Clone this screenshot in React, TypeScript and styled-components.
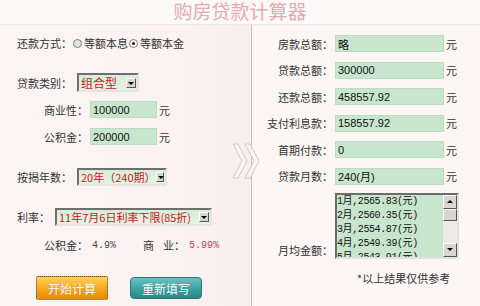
import React from 'react'
import styled, {createGlobalStyle} from 'styled-components'

const GlobalStyle = createGlobalStyle`
  body {
    margin: 0;
    background: #fbf4f3;
    font-family: "Noto Sans CJK SC", "Liberation Sans", sans-serif;
  }
`

const schedule = [
  '1月,2565.83(元)',
  '2月,2560.35(元)',
  '3月,2554.87(元)',
  '4月,2549.39(元)',
  '5月,2543.91(元)',
]

const results = [
  {label: '房款总额：', value: '略'},
  {label: '贷款总额：', value: '300000'},
  {label: '还款总额：', value: '458557.92'},
  {label: '支付利息款：', value: '158557.92'},
  {label: '首期付款：', value: '0'},
  {label: '贷款月数：', value: '240(月)'},
]

const App = () => {
  return (
    <Page>
      <GlobalStyle />
      <Title>购房贷款计算器</Title>
      <Main>
        <Left>
          <Row $top={9} $h={18}>
            <Label $w={55}>还款方式：</Label>
            <Radio />
            <Text>等额本息</Text>
            <Radio $checked />
            <Text>等额本金</Text>
          </Row>
          <Row $top={21} $h={19}>
            <Label $w={60}>贷款类别：</Label>
            <Select $w={62}>
              <SelectText $big>组合型</SelectText>
              <DropButton />
            </Select>
          </Row>
          <Row $top={9} $h={17}>
            <Label $w={71} $right>商业性：</Label>
            <Field $w={67} readOnly defaultValue="100000" />
            <Unit>元</Unit>
          </Row>
          <Row $top={10} $h={17}>
            <Label $w={71} $right>公积金：</Label>
            <Field $w={67} readOnly defaultValue="200000" />
            <Unit>元</Unit>
          </Row>
          <Row $top={23} $h={18}>
            <Label $w={60}>按揭年数：</Label>
            <Select $w={90}>
              <SelectText>20年（240期）</SelectText>
              <DropButton />
            </Select>
          </Row>
          <Row $top={22} $h={18}>
            <Label $w={38}>利率：</Label>
            <Select $w={157}>
              <SelectText>11年7月6日利率下限(85折)</SelectText>
              <DropButton />
            </Select>
          </Row>
          <Row $top={12} $h={14}>
            <Label $w={71} $right>公积金：</Label>
            <Rate $w={51}>4.9%</Rate>
            <Label $w={42}>
              <Spaced>商</Spaced>业：
            </Label>
            <Rate $red>5.99%</Rate>
          </Row>
          <ButtonRow>
            <ActionButton $kind="orange">开始计算</ActionButton>
            <ActionButton $kind="teal">重新填写</ActionButton>
          </ButtonRow>
        </Left>
        <Divider>
          <Arrows width="30" height="36" viewBox="0 0 30 36">
            <polygon points="1,1 6,1 15,18 6,35 1,35 10,18" fill="#fbf4f3" stroke="#d4c6c6" strokeWidth="1" />
            <polygon points="13,1 18,1 27,18 18,35 13,35 22,18" fill="#fbf4f3" stroke="#d4c6c6" strokeWidth="1" />
          </Arrows>
        </Divider>
        <Right>
          {results.map((r) => (
            <ResultRow key={r.label}>
              <ResultLabel>{r.label}</ResultLabel>
              <Field $w={109} readOnly defaultValue={r.value} />
              <Unit>元</Unit>
            </ResultRow>
          ))}
          <ListRow>
            <ResultLabel>月均金额：</ResultLabel>
            <ListBox>
              <ListItems>
                {schedule.map((s) => (
                  <ListItem key={s}>{s}</ListItem>
                ))}
              </ListItems>
              <ScrollBar>
                <ScrollButton>
                  <Tri $up />
                </ScrollButton>
                <Thumb />
                <Track />
                <ScrollButton>
                  <Tri />
                </ScrollButton>
              </ScrollBar>
            </ListBox>
          </ListRow>
          <Note>*以上结果仅供参考</Note>
        </Right>
      </Main>
    </Page>
  )
}

export default App

const Page = styled.div`
  width: 480px;
  height: 306px;
  display: flex;
  flex-direction: column;
  overflow: hidden;
  background: #fbf4f3;
`
const Title = styled.div`
  height: 24px;
  line-height: 22px;
  text-align: center;
  font-size: 19px;
  color: #e3aab2;
  background: #fdf9f8;
  border-bottom: 1px solid #f1e6e4;
`
const Main = styled.div`
  flex: 1;
  display: flex;
`
const Left = styled.div`
  width: 251px;
  padding-left: 17px;
  box-sizing: border-box;
  display: flex;
  flex-direction: column;
  background: linear-gradient(90deg, #fbf5f4 0%, #fbf2f1 70%, #f8eeed 100%);
`
const Row = styled.div<{$top: number; $h: number}>`
  display: flex;
  align-items: center;
  margin-top: ${(p) => p.$top}px;
  height: ${(p) => p.$h}px;
`
const Label = styled.span<{$w: number; $right?: boolean}>`
  width: ${(p) => p.$w}px;
  flex-shrink: 0;
  font-size: 11px;
  color: #333;
  white-space: nowrap;
  text-align: ${(p) => (p.$right ? 'right' : 'left')};
`
const Spaced = styled.span`
  margin-right: 9px;
`
const Text = styled.span`
  font-size: 11px;
  color: #333;
  margin-left: 2px;
`
const Radio = styled.span<{$checked?: boolean}>`
  width: 9px;
  height: 9px;
  border-radius: 50%;
  box-sizing: border-box;
  border: 1px solid #7d7d7d;
  background: ${(p) => (p.$checked ? '#fff' : '#d6ecd9')};
  margin-left: 1px;
  position: relative;
  &::after {
    content: '';
    display: ${(p) => (p.$checked ? 'block' : 'none')};
    position: absolute;
    left: 2px;
    top: 2px;
    width: 3px;
    height: 3px;
    border-radius: 50%;
    background: #111;
  }
`
const Select = styled.div<{$w: number}>`
  width: ${(p) => p.$w}px;
  height: 100%;
  box-sizing: border-box;
  display: flex;
  align-items: center;
  justify-content: space-between;
  border: 2px solid;
  border-color: #6f6f6f #e4e4e4 #e4e4e4 #6f6f6f;
  background: linear-gradient(180deg, #d8ecd9 0%, #e6f1e4 100%);
  padding: 0 1px 0 2px;
`
const SelectText = styled.span<{$big?: boolean}>`
  font-size: ${(p) => (p.$big ? '12px' : '11px')};
  color: #c41a1a;
  white-space: nowrap;
  line-height: 1;
`
const DropButton = styled.span`
  width: 10px;
  height: 10px;
  box-sizing: border-box;
  border: 1px solid;
  border-color: #fff #555 #555 #fff;
  background: #d8d6d0;
  position: relative;
  &::after {
    content: '';
    position: absolute;
    left: 1px;
    top: 3px;
    border-left: 3px solid transparent;
    border-right: 3px solid transparent;
    border-top: 3px solid #000;
  }
`
const Field = styled.input<{$w: number}>`
  width: ${(p) => p.$w}px;
  height: 100%;
  box-sizing: border-box;
  border: 1px solid #bcdcc2;
  background: #c7e6cd;
  padding: 0 0 0 2px;
  margin: 0 0 0 2px;
  font-family: "Liberation Sans", "Noto Sans CJK SC", sans-serif;
  font-size: 11px;
  color: #111;
  outline: none;
`
const Unit = styled.span`
  font-size: 11px;
  color: #333;
  margin-left: 2px;
`
const Rate = styled.span<{$w?: number; $red?: boolean}>`
  width: ${(p) => (p.$w ? `${p.$w}px` : 'auto')};
  font-family: "Liberation Mono", monospace;
  font-size: 10px;
  color: ${(p) => (p.$red ? '#b9444c' : '#444')};
  margin-left: 4px;
`
const ButtonRow = styled.div`
  display: flex;
  align-items: center;
  gap: 22px;
  margin-top: 24px;
  padding-left: 19px;
`
const ActionButton = styled.button<{$kind: 'orange' | 'teal'}>`
  width: 72px;
  height: ${(p) => (p.$kind === 'orange' ? '24px' : '22px')};
  box-sizing: border-box;
  border-radius: ${(p) => (p.$kind === 'orange' ? '2px' : '4px')};
  border: 1px ${(p) => (p.$kind === 'orange' ? 'dotted #5a4a30' : 'solid #2b7676')};
  background: ${(p) =>
    p.$kind === 'orange'
      ? 'linear-gradient(180deg, #fdd45a 0%, #f7a921 50%, #e98a05 100%)'
      : 'linear-gradient(180deg, #6cc4c2 0%, #3fa5a4 50%, #2a8887 100%)'};
  color: #fff;
  font-family: "Noto Sans CJK SC", sans-serif;
  font-size: 12px;
  padding: 0;
  text-shadow: 0 0 1px rgba(0, 0, 0, 0.2);
`
const Divider = styled.div`
  width: 1px;
  background: #c9bdbd;
  position: relative;
`
const Arrows = styled.svg`
  position: absolute;
  left: -19px;
  top: 118px;
`
const Right = styled.div`
  flex: 1;
  display: flex;
  flex-direction: column;
  padding-top: 10px;
  background: #fcf6f5;
`
const ResultRow = styled.div`
  display: flex;
  align-items: center;
  height: 17px;
  margin-bottom: 9.6px;
`
const ResultLabel = styled.span`
  width: 81px;
  flex-shrink: 0;
  text-align: right;
  font-size: 11px;
  color: #333;
  white-space: nowrap;
`
const ListRow = styled.div`
  display: flex;
  align-items: flex-end;
  margin-top: -2px;
  ${ResultLabel} {
    margin-bottom: 1px;
  }
`
const ListBox = styled.div`
  width: 124px;
  height: 66px;
  margin-left: 2px;
  box-sizing: border-box;
  border: 2px solid;
  border-color: #6c6c6c #e2e2e2 #e2e2e2 #6c6c6c;
  background: #c7e6cd;
  display: flex;
  overflow: hidden;
`
const ListItems = styled.div`
  flex: 1;
  overflow: hidden;
`
const ListItem = styled.div`
  font-family: "Liberation Mono", "Noto Sans CJK SC", monospace;
  font-size: 10px;
  line-height: 14px;
  letter-spacing: -0.4px;
  color: #111;
  white-space: nowrap;
`
const ScrollBar = styled.div`
  width: 14px;
  display: flex;
  flex-direction: column;
  background: #e9e7e2;
`
const ScrollButton = styled.div`
  height: 14px;
  box-sizing: border-box;
  border: 1px solid;
  border-color: #fff #555 #555 #fff;
  background: #d8d6d0;
  display: flex;
  align-items: center;
  justify-content: center;
`
const Tri = styled.span<{$up?: boolean}>`
  width: 0;
  height: 0;
  border-left: 3px solid transparent;
  border-right: 3px solid transparent;
  ${(p) => (p.$up ? 'border-bottom: 3px solid #000;' : 'border-top: 3px solid #000;')}
`
const Thumb = styled.div`
  height: 12px;
  box-sizing: border-box;
  border: 1px solid;
  border-color: #fff #555 #555 #fff;
  background: #d8d6d0;
`
const Track = styled.div`
  flex: 1;
  background: #ecebe7;
`
const Note = styled.div`
  margin-top: 11px;
  padding-left: 105px;
  font-size: 11px;
  color: #333;
`
